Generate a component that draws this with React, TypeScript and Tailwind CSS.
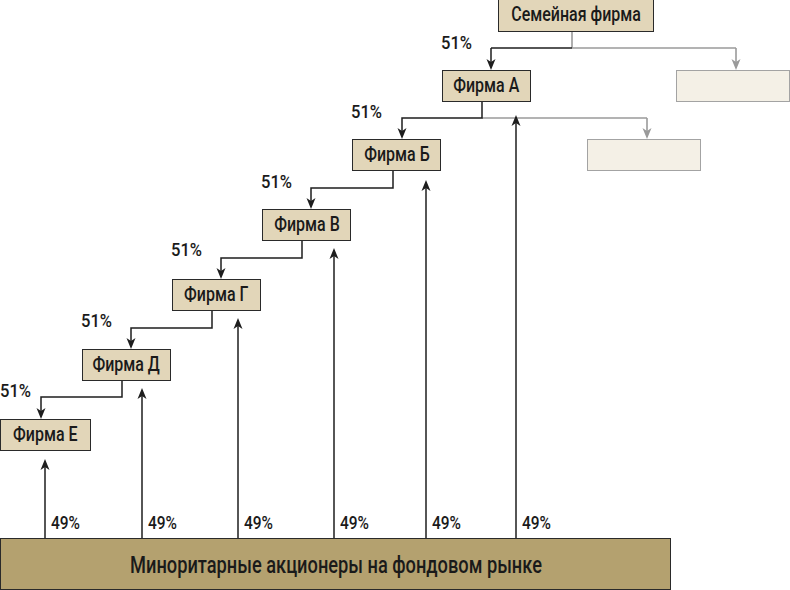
import React from "react";

const font = { fontFamily: 'Roboto, "Liberation Sans", sans-serif' };

const boxes = [
  { label: "Семейная фирма", cls: "left-[498px] -top-[2px] w-[156px] h-[34px]" },
  { label: "Фирма А", cls: "left-[442px] top-[70px] w-[89px] h-[32px]" },
  { label: "Фирма Б", cls: "left-[352px] top-[139px] w-[89px] h-[32px]" },
  { label: "Фирма В", cls: "left-[262px] top-[209px] w-[89px] h-[32px]" },
  { label: "Фирма Г", cls: "left-[172px] top-[279px] w-[89px] h-[32px]" },
  { label: "Фирма Д", cls: "left-[82px] top-[349px] w-[89px] h-[32px]" },
  { label: "Фирма Е", cls: "left-0 top-[419px] w-[91px] h-[32px]" },
];

const grayBoxes = [
  "left-[676px] top-[70px] w-[114px] h-[32px]",
  "left-[587px] top-[139px] w-[114px] h-[32px]",
];

const pct51 = [
  "left-[441px] top-[34px]",
  "left-[351px] top-[103px]",
  "left-[261px] top-[173px]",
  "left-[171px] top-[241px]",
  "left-[81px] top-[312px]",
  "left-0 top-[382px]",
];

const pct49 = [
  "left-[51px]",
  "left-[148px]",
  "left-[244px]",
  "left-[340px]",
  "left-[432px]",
  "left-[522px]",
];

const ups = [
  { x: 45, tip: 459 },
  { x: 142, tip: 388 },
  { x: 238, tip: 318 },
  { x: 334, tip: 248 },
  { x: 426, tip: 180 },
  { x: 516, tip: 115 },
];

const steps = [
  { vx: 482, y0: 101, hy: 118, ax: 402, y1: 139 },
  { vx: 393, y0: 171, hy: 188, ax: 311, y1: 209 },
  { vx: 302, y0: 241, hy: 258, ax: 221, y1: 279 },
  { vx: 212, y0: 311, hy: 328, ax: 131, y1: 349 },
  { vx: 122, y0: 381, hy: 397, ax: 41, y1: 419 },
];

function Down({ x, y, c }: { x: number; y: number; c: string }) {
  return <path d={`M${x} ${y} L${x - 4.5} ${y - 11} L${x} ${y - 8} L${x + 4.5} ${y - 11} Z`} fill={c} />;
}
function Up({ x, y, c }: { x: number; y: number; c: string }) {
  return <path d={`M${x} ${y} L${x - 4.5} ${y + 11} L${x} ${y + 8} L${x + 4.5} ${y + 11} Z`} fill={c} />;
}

export default function App() {
  const dark = "#1e1e1e";
  const gray = "#9a9a9a";
  return (
    <div className="w-[790px] h-[590px] bg-white flex flex-col overflow-hidden text-[#1a1a1a] font-medium" style={font}>
      <div className="relative h-[538px] shrink-0">
        <svg className="absolute inset-0" width={790} height={538}>
          <line x1={572} y1={32} x2={572} y2={48} stroke={gray} strokeWidth={1.6} />
          <line x1={572} y1={48} x2={736} y2={48} stroke={gray} strokeWidth={1.6} />
          <line x1={736} y1={48} x2={736} y2={64} stroke={gray} strokeWidth={1.6} />
          <Down x={736} y={70} c={gray} />
          <line x1={491} y1={48} x2={572} y2={48} stroke={dark} strokeWidth={1.5} />
          <line x1={491} y1={48} x2={491} y2={64} stroke={dark} strokeWidth={1.5} />
          <Down x={491} y={70} c={dark} />
          <line x1={482} y1={118} x2={647} y2={118} stroke={gray} strokeWidth={1.6} />
          <line x1={647} y1={118} x2={647} y2={133} stroke={gray} strokeWidth={1.6} />
          <Down x={647} y={139} c={gray} />
          {steps.map((s, i) => (
            <g key={i}>
              <polyline
                points={`${s.vx},${s.y0} ${s.vx},${s.hy} ${s.ax},${s.hy} ${s.ax},${s.y1 - 6}`}
                fill="none"
                stroke={dark}
                strokeWidth={1.5}
              />
              <Down x={s.ax} y={s.y1} c={dark} />
            </g>
          ))}
          {ups.map((u, i) => (
            <g key={i}>
              <line x1={u.x} y1={538} x2={u.x} y2={u.tip + 6} stroke={dark} strokeWidth={1.5} />
              <Up x={u.x} y={u.tip} c={dark} />
            </g>
          ))}
        </svg>
        {boxes.map((b) => (
          <div
            key={b.label}
            className={`absolute flex items-center justify-center border-[1.5px] border-[#2a2a2a] bg-[#e2d6b9] text-[19.5px] leading-none ${b.cls}`}
          >
            <span className="inline-block scale-x-[0.82] whitespace-nowrap">{b.label}</span>
          </div>
        ))}
        {grayBoxes.map((c, i) => (
          <div key={i} className={`absolute border-[1.5px] border-[#a3a3a3] bg-[#f4f0e6] ${c}`} />
        ))}
        {pct51.map((c, i) => (
          <div key={i} className={`absolute text-[18px] leading-none origin-left scale-x-[0.92] ${c}`}>
            51%
          </div>
        ))}
        {pct49.map((c, i) => (
          <div key={i} className={`absolute top-[514px] text-[18px] leading-none origin-left scale-x-[0.86] ${c}`}>
            49%
          </div>
        ))}
      </div>
      <div className="w-[671px] h-[52px] border-[1.5px] border-[#2a2a2a] bg-[#b4a16f] flex items-center justify-center text-[24px] leading-none pt-[1px]">
        <span className="inline-block scale-x-[0.76] whitespace-nowrap">Миноритарные акционеры на фондовом рынке</span>
      </div>
    </div>
  );
}
